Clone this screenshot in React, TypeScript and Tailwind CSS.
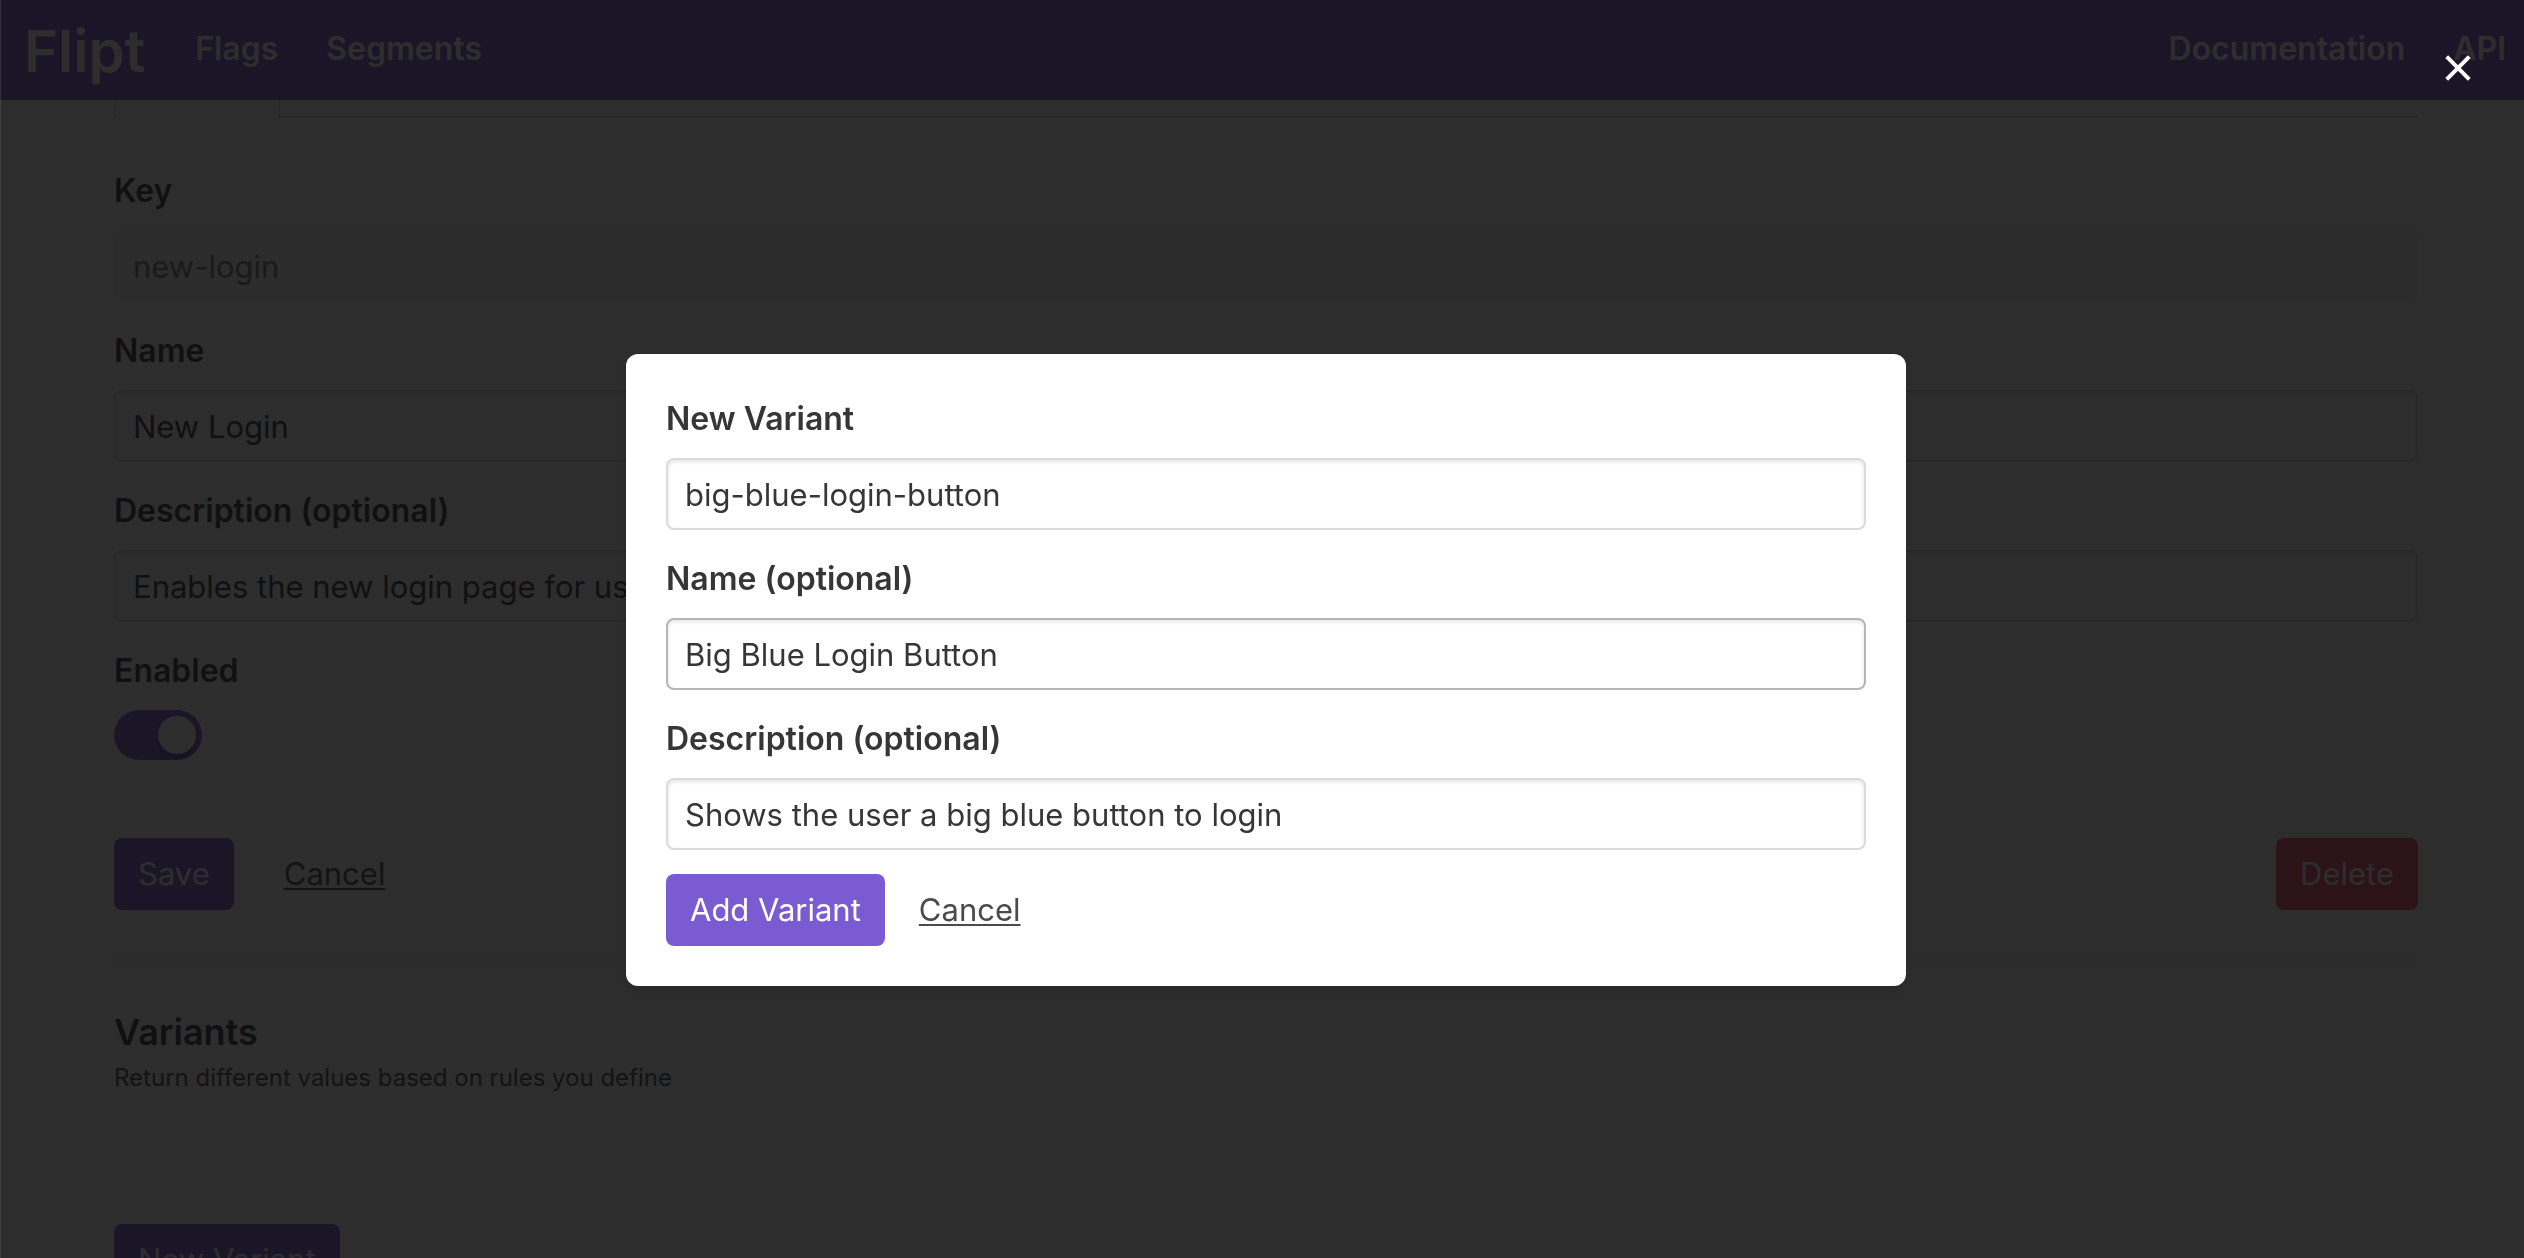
import React, { useState } from "react";

type FieldProps = { id: string; label: string; value: string; disabled?: boolean; active?: boolean };

const labelText = "mb-[14px] block text-[32px] leading-[50px] font-semibold";

function Field({ id, label, value, disabled = false, active = false }: FieldProps) {
  const [text, setText] = useState(value);
  const tone = disabled
    ? "border-[#f5f5f5] bg-[#f5f5f5] text-[#7a7a7a]"
    : active
      ? "border-[#b5b5b5] bg-white text-[#363636] shadow-[inset_0_2px_4px_rgba(10,10,10,0.1)]"
      : "border-[#dbdbdb] bg-white text-[#363636] shadow-[inset_0_2px_4px_rgba(10,10,10,0.1)]";
  return (
    <div className="mb-6">
      <label htmlFor={id} className={labelText}>
        {label}
      </label>
      <input
        id={id}
        type="text"
        value={text}
        disabled={disabled}
        onChange={(e) => setText(e.target.value)}
        className={`block h-[72px] w-full rounded-lg border-2 px-[17px] outline-none ${tone}`}
      />
    </div>
  );
}

const button = "h-[72px] rounded-lg px-6 text-white";
const textButton = "h-[72px] text-[#4a4a4a] underline decoration-2 underline-offset-[3px]";

export default function App() {
  const [enabled, setEnabled] = useState(true);
  return (
    <div className="h-screen overflow-hidden bg-white font-['Inter','Liberation_Sans',sans-serif] text-[31px] leading-[48px] text-[#363636]">
      <nav className="flex h-[100px] items-center justify-between bg-[#7a5bd1] pr-[18px] pb-0.5 pl-5 text-[32px] font-semibold text-white">
        <div className="flex items-center">
          <a href="#home" className="px-1 pt-1 text-[58px]">Flipt</a>
          <a href="#flags" className="ml-[46px]">Flags</a>
          <a href="#segments" className="ml-12">Segments</a>
        </div>
        <div className="flex items-center gap-12">
          <a href="#docs">Documentation</a>
          <a href="#api">API</a>
        </div>
      </nav>

      <main className="pr-[106px] pl-[114px]">
        <div className="mb-12 flex h-[18px]">
          <div className="w-[166px] border-x-2 border-[#dbdbdb]" />
          <div className="flex-1 border-b-2 border-[#dbdbdb]" />
        </div>

        <form onSubmit={(e) => e.preventDefault()}>
          <Field id="flag-key" label="Key" value="new-login" disabled />
          <Field id="flag-name" label="Name" value="New Login" />
          <Field
            id="flag-description"
            label="Description (optional)"
            value="Enables the new login page for users"
          />
          <label htmlFor="flag-enabled" className={labelText}>
            Enabled
          </label>
          <div className="relative h-[50px] w-[88px]">
            <input
              id="flag-enabled"
              type="checkbox"
              role="switch"
              checked={enabled}
              onChange={(e) => setEnabled(e.target.checked)}
              className="peer block h-[50px] w-[88px] appearance-none rounded-full bg-[#b5b5b5] checked:bg-[#7a5bd1]"
            />
            <span className="pointer-events-none absolute top-[6px] left-[6px] h-[38px] w-[38px] rounded-full bg-white shadow-[0_6px_2px_rgba(0,0,0,0.1),0_4px_4px_rgba(0,0,0,0.1)] peer-checked:left-[44px]" />
          </div>

          <div className="mt-[78px] flex items-center justify-between">
            <div className="flex items-center gap-[50px]">
              <button type="submit" className={`${button} bg-[#7a5bd1]`}>Save</button>
              <button type="button" className={textButton}>Cancel</button>
            </div>
            <button type="button" className={`${button} bg-[#f14668]`}>Delete</button>
          </div>
        </form>

        <hr className="mt-12 h-1 border-0 bg-[#f5f5f5]" />

        <section className="mt-[46px]">
          <h2 className="text-[36px] leading-[48px] font-semibold">Variants</h2>
          <p className="mt-1 text-[24px] leading-9 text-[#4a4a4a]">
            Return different values based on rules you define
          </p>
          <button type="button" className={`${button} mt-32 bg-[#7a5bd1]`}>New Variant</button>
        </section>
      </main>

      <div className="fixed inset-0 flex items-center justify-center border-l border-white/10 bg-[#0a0a0a]/86 pt-[82px] pl-[7px]">
        <div
          role="dialog"
          aria-modal="true"
          aria-label="New Variant"
          className="w-[1280px] max-w-full rounded-xl bg-white p-10 shadow-[0_4px_6px_rgba(10,10,10,0.1)]"
        >
          <form onSubmit={(e) => e.preventDefault()}>
            <Field id="variant-key" label="New Variant" value="big-blue-login-button" />
            <Field id="variant-name" label="Name (optional)" value="Big Blue Login Button" active />
            <Field
              id="variant-description"
              label="Description (optional)"
              value="Shows the user a big blue button to login"
            />
            <div className="flex items-center gap-[34px]">
              <button type="submit" className={`${button} bg-[#7a5bd1]`}>Add Variant</button>
              <button type="button" className={textButton}>Cancel</button>
            </div>
          </form>
        </div>
        <button
          type="button"
          aria-label="Close"
          className="absolute top-9 right-[34px] flex h-16 w-16 items-center justify-center"
        >
          <svg viewBox="0 0 32 32" className="h-8 w-8" stroke="white" strokeWidth="4">
            <path d="M4.7 4.7 27.3 27.3M27.3 4.7 4.7 27.3" />
          </svg>
        </button>
      </div>
    </div>
  );
}
